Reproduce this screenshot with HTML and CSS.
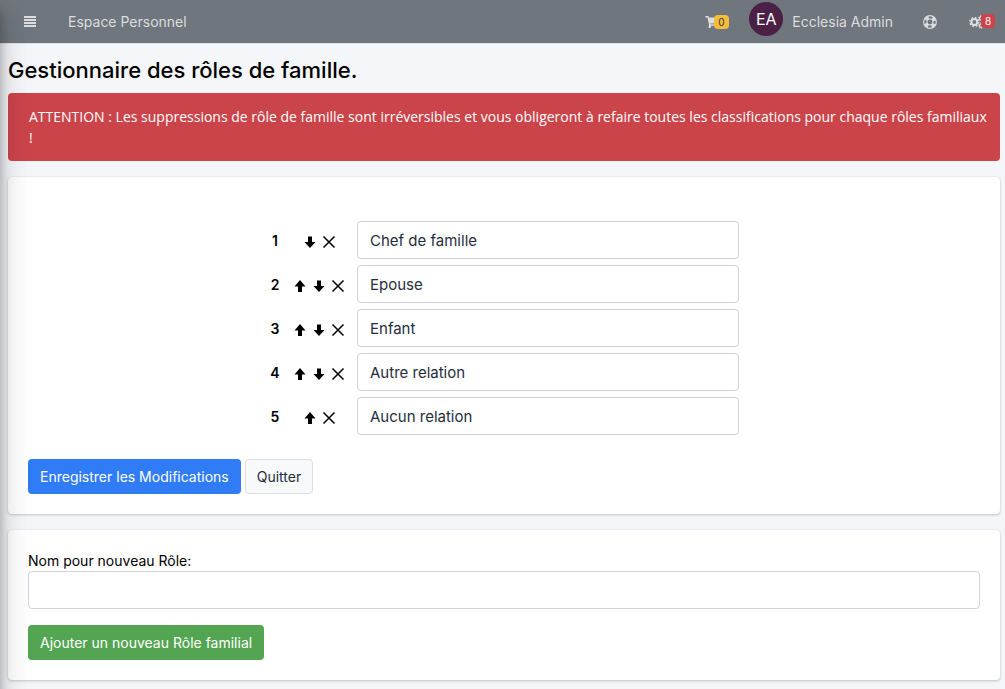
FILE: index.html
```html
<!DOCTYPE html>
<html lang="fr">
<head>
<meta charset="utf-8">
<meta name="viewport" content="width=device-width, initial-scale=1">
<title>Gestionnaire des rôles de famille</title>
<link rel="stylesheet" href="styles.css">
</head>
<body>
<svg class="sprite" aria-hidden="true">
  <symbol id="up" viewBox="0 0 14 14"><path d="M7 1 12.500 7.500H9V13H5V7.500H1.500Z"/></symbol>
  <symbol id="down" viewBox="0 0 14 14"><path d="M7 13 1.500 7H5V1.500H9V7H12.500Z"/></symbol>
  <symbol id="cross" viewBox="0 0 14 14"><path d="M1.500 1.500 12.500 12.500M12.500 1.500 1.500 12.500" fill="none" stroke="currentColor" stroke-width="1.500"/></symbol>
</svg>
<div class="sidebar-edge" aria-hidden="true"></div>
<header class="topbar">
  <button class="nav-btn menu" type="button" aria-label="Menu">
    <svg width="12" height="11" viewBox="0 0 12 11"><path d="M0 0h12v2H0zM0 3h12v2H0zM0 6h12v2H0zM0 9h12v2H0z"/></svg>
  </button>
  <a class="nav-link" href="#">Espace Personnel</a>
  <nav class="tools" aria-label="Compte">
    <a class="icon-link cart" href="#" aria-label="Panier">
      <svg width="14" height="12" viewBox="0 0 576 512"><path d="M528.120 301.319l47.273-208C578.806 78.301 567.391 64 551.990 64H159.208l-9.166-44.810C147.758 8.021 137.930 0 126.529 0H24C10.745 0 0 10.745 0 24v16c0 13.255 10.745 24 24 24h69.883l70.248 343.435C147.325 417.100 136 435.222 136 456c0 30.928 25.072 56 56 56s56-25.072 56-56c0-15.674-6.447-29.835-16.824-40h209.647C430.447 426.165 424 440.326 424 456c0 30.928 25.072 56 56 56s56-25.072 56-56c0-22.172-12.888-41.332-31.579-50.405l5.517-24.276c3.413-15.018-8.002-29.319-23.403-29.319H218.117l-6.545-32h293.145c11.206 0 20.920-7.754 23.403-18.681z"/></svg>
      <span class="badge yellow">0</span>
    </a>
    <a class="user" href="#"><span class="avatar">EA</span><span>Ecclesia Admin</span></a>
    <a class="icon-link help" href="#" aria-label="Aide">
      <svg width="14" height="14" viewBox="0 0 14 14"><g fill="none" stroke="currentColor"><circle cx="7" cy="7" r="6.300" stroke-width="1.200"/><circle cx="7" cy="7" r="3" stroke-width="1.100"/><circle cx="7" cy="7" r="4.800" stroke-width="3" stroke-dasharray="3.770 3.770" stroke-dashoffset="-1.885"/></g></svg>
    </a>
    <a class="icon-link settings" href="#" aria-label="Paramètres">
      <svg width="17" height="14" viewBox="0 0 17 14"><g fill="none" stroke="currentColor"><circle cx="5.300" cy="7" r="2.900" stroke-width="2"/><circle cx="5.300" cy="7" r="4.400" stroke-width="1.600" stroke-dasharray="1.728 1.728"/><circle cx="12" cy="3.300" r="1.600" stroke-width="1.300"/><circle cx="12" cy="3.300" r="2.600" stroke-width="1" stroke-dasharray="1.361 1.361"/><circle cx="12" cy="10.700" r="1.600" stroke-width="1.300"/><circle cx="12" cy="10.700" r="2.600" stroke-width="1" stroke-dasharray="1.361 1.361"/></g></svg>
      <span class="badge red">8</span>
    </a>
  </nav>
</header>
<main>
  <h1>Gestionnaire des rôles de famille.</h1>
  <div class="alert" role="alert">ATTENTION : Les suppressions de rôle de famille sont irréversibles et vous obligeront à refaire toutes les classifications pour chaque rôles familiaux<br>!</div>

  <form class="card roles">
    <table>
      <tr>
        <th scope="row">1</th>
        <td class="actions"><div><button type="button" aria-label="Descendre"><svg><use href="#down"/></svg></button><button type="button" aria-label="Supprimer"><svg><use href="#cross"/></svg></button></div></td>
        <td><input class="field" type="text" aria-label="Rôle 1" value="Chef de famille"></td>
      </tr>
      <tr>
        <th scope="row">2</th>
        <td class="actions"><div><button type="button" aria-label="Monter"><svg><use href="#up"/></svg></button><button type="button" aria-label="Descendre"><svg><use href="#down"/></svg></button><button type="button" aria-label="Supprimer"><svg><use href="#cross"/></svg></button></div></td>
        <td><input class="field" type="text" aria-label="Rôle 2" value="Epouse"></td>
      </tr>
      <tr>
        <th scope="row">3</th>
        <td class="actions"><div><button type="button" aria-label="Monter"><svg><use href="#up"/></svg></button><button type="button" aria-label="Descendre"><svg><use href="#down"/></svg></button><button type="button" aria-label="Supprimer"><svg><use href="#cross"/></svg></button></div></td>
        <td><input class="field" type="text" aria-label="Rôle 3" value="Enfant"></td>
      </tr>
      <tr>
        <th scope="row">4</th>
        <td class="actions"><div><button type="button" aria-label="Monter"><svg><use href="#up"/></svg></button><button type="button" aria-label="Descendre"><svg><use href="#down"/></svg></button><button type="button" aria-label="Supprimer"><svg><use href="#cross"/></svg></button></div></td>
        <td><input class="field" type="text" aria-label="Rôle 4" value="Autre relation"></td>
      </tr>
      <tr>
        <th scope="row">5</th>
        <td class="actions"><div><button type="button" aria-label="Monter"><svg><use href="#up"/></svg></button><button type="button" aria-label="Supprimer"><svg><use href="#cross"/></svg></button></div></td>
        <td><input class="field" type="text" aria-label="Rôle 5" value="Aucun relation"></td>
      </tr>
    </table>
    <div class="buttons">
      <button class="btn primary" type="submit">Enregistrer les Modifications</button>
      <button class="btn light" type="button">Quitter</button>
    </div>
  </form>

  <form class="card new-role">
    <label for="new-role">Nom pour nouveau Rôle:</label>
    <input class="field" id="new-role" type="text">
    <button class="btn success" type="submit">Ajouter un nouveau Rôle familial</button>
  </form>
</main>
</body>
</html>
```

FILE: styles.css
```css
* { box-sizing: border-box; }
body {
  margin: 0;
  background: #f4f6f9;
  color: #000;
  font: 14px/21px Inter, "Liberation Sans", sans-serif;
  overflow-x: hidden;
}
button, input { font: inherit; color: inherit; }
a { color: inherit; text-decoration: none; }
svg { display: block; fill: currentColor; }
.sprite { position: absolute; width: 0; height: 0; }

/* shadow cast by the collapsed side menu */
.sidebar-edge {
  position: fixed;
  top: 0;
  bottom: -60px;
  right: 100%;
  width: 250px;
  z-index: 10;
  pointer-events: none;
  box-shadow: 0 14px 28px rgba(0, 0, 0, .25), 0 10px 10px rgba(0, 0, 0, .22);
}

.topbar {
  display: flex;
  align-items: center;
  height: 44px;
  padding: 0 19px 0 24px;
  background: #6f767d;
  border-bottom: 1px solid #dee2e6;
  color: #dbdddf;
}
.nav-btn { padding: 0; border: 0; background: none; }
.nav-link { margin-left: 32px; }
.tools { display: flex; align-items: center; margin-left: auto; }
.icon-link { position: relative; }
.badge {
  position: absolute;
  top: -1px;
  padding: 0 4px;
  border-radius: 4px;
  font-size: 10px;
  line-height: 14px;
}
.yellow { left: 9px; background: #f5bd3a; color: #343a40; }
.red { left: 12px; background: #cb444a; color: #fff; }
.user { display: flex; align-items: center; gap: 9px; margin: 0 30px; }
.avatar {
  width: 34px;
  height: 34px;
  margin-bottom: 5px;
  border-radius: 50%;
  background: #4a2145;
  color: #fff;
  font-size: 16px;
  line-height: 34px;
  text-align: center;
}
.settings { margin-left: 32px; }

main { padding: 12px 5px 8px 8px; }
h1 { margin: 0 0 8px; font-size: 22px; line-height: 29px; font-weight: 500; }
.alert {
  margin-bottom: 16px;
  padding: 13px 8px 13px 21px;
  border-radius: 4px;
  background: #cb444a;
  color: #fff;
  font-family: "Open Sans", "Liberation Sans", sans-serif;
}
.card {
  padding: 20px;
  border-radius: 4px;
  background: #fff;
  box-shadow: 0 0 1px rgba(0, 0, 0, .13), 0 1px 3px rgba(0, 0, 0, .2);
}
.roles { margin-bottom: 16px; padding-top: 41px; }
table {
  width: 100%;
  max-width: 470px;
  margin: 0 auto 21px;
  table-layout: fixed;
  border-collapse: collapse;
}
th, td { height: 44px; padding: 0; }
th { width: 12px; font-weight: 600; }
.actions { width: 76px; }
.actions div { display: flex; justify-content: center; gap: 5px; padding-top: 4px; }
.actions button { padding: 0; border: 0; background: none; cursor: pointer; }
.actions svg { width: 14px; height: 14px; }
.field {
  display: block;
  width: 100%;
  height: 38px;
  padding: 6px 12px;
  border: 1px solid #ced4da;
  border-radius: 4px;
  background: #fff;
  color: #1f2d3d;
  font-size: 15px;
}
.buttons { display: flex; gap: 4px; }
.btn {
  padding: 6px 11px;
  border: 1px solid transparent;
  border-radius: 4px;
  color: #fff;
  cursor: pointer;
}
.primary { background: #2f7cf6; }
.light { background: #f8f9fa; border-color: #ddd; color: #1f2d3d; }
.success { background: #53a551; }
.new-role label { display: block; }
.new-role .field { margin-bottom: 16px; }
```
